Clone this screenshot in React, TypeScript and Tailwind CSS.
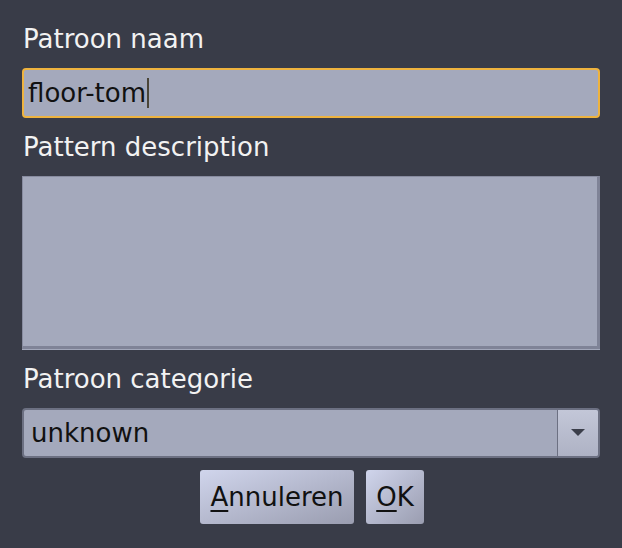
export default function App() {
  const font = { fontFamily: '"DejaVu Sans", "Liberation Sans", sans-serif' };
  return (
    <main
      className="h-[548px] w-[622px] bg-[#393c48] px-[22px] pt-[25px] text-[26px] leading-[28px]"
      style={font}
    >
      {/* Naam */}
      <div className="pl-[1px] text-[#f2f2f2]">Patroon naam</div>
      <div className="mt-[15px] flex h-[50px] items-center rounded-[4px] border-2 border-[#eeb33f] bg-[#a4a9bc] pl-[4px] text-[#111]">
        <span>floor-tom</span>
        <span className="ml-[1px] h-[30px] w-[2px] bg-[#4a4538]" />
      </div>

      {/* Beschrijving */}
      <div className="mt-[15px] pl-[1px] text-[#f2f2f2]">Pattern description</div>
      <div className="mt-[15px] h-[173px] border-[1.5px] border-r-[3px] border-b-[3px] border-[#888ca0] border-r-[#7f8397] border-b-[#7f8397] bg-[#a4a9bc] shadow-[0_1px_0_#a4a9bc]" />

      {/* Categorie */}
      <div className="mt-[16px] pl-[1px] text-[#f2f2f2]">Patroon categorie</div>
      <div className="mt-[15px] flex h-[50px] overflow-hidden rounded-[4px] border-2 border-[#6c7082] bg-[#a4a9bc] text-[#111]">
        <div className="flex flex-1 items-center pl-[7px]">unknown</div>
        <div className="flex w-[41px] items-center justify-center border-l-[1.5px] border-[#6c7082] bg-gradient-to-b from-[#c3c7d8] to-[#aeb2c4]">
          <svg width="14" height="8" viewBox="0 0 14 8">
            <path d="M0 0 H14 L7 7 Z" fill="#3b3e4a" />
          </svg>
        </div>
      </div>

      {/* Knoppen */}
      <div className="mt-[12px] flex justify-center gap-[12px] pl-[2px]">
        <button className="h-[54px] w-[154px] rounded-[3px] bg-gradient-to-br from-[#d0d5ec] to-[#9a9db0] text-[#111]">
          <span className="underline decoration-2 underline-offset-[4px]">A</span>nnuleren
        </button>
        <button className="h-[54px] w-[58px] rounded-[3px] bg-gradient-to-br from-[#d0d5ec] to-[#9a9db0] text-[#111]">
          <span className="underline decoration-2 underline-offset-[4px]">O</span>K
        </button>
      </div>
    </main>
  );
}
